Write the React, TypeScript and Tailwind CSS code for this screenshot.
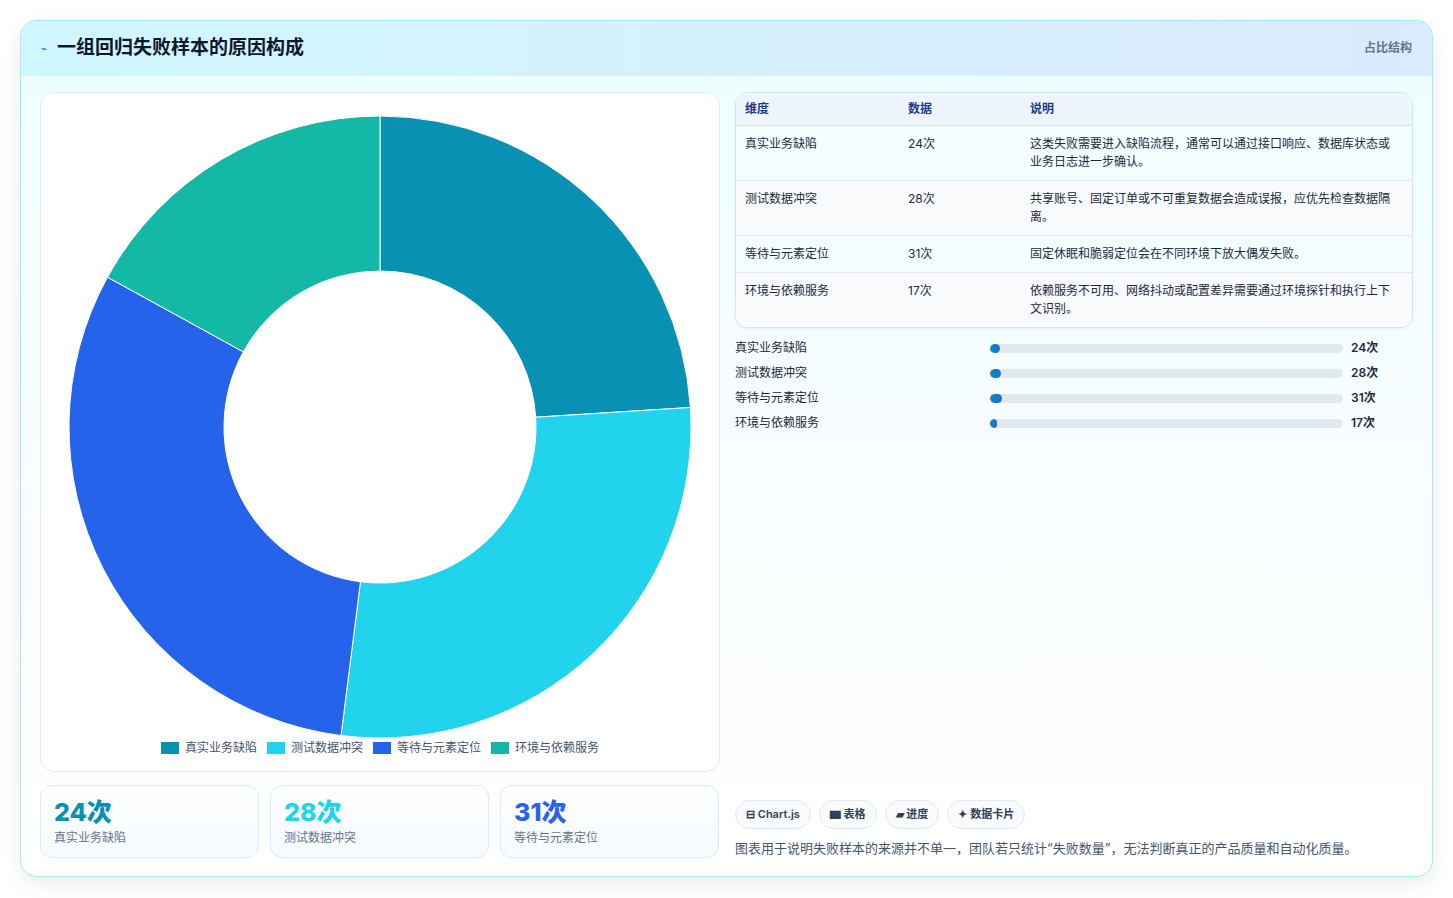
import React from "react";

const data = [
  { name: "真实业务缺陷", v: 24, c: "#0891b2", d: "这类失败需要进入缺陷流程，通常可以通过接口响应、数据库状态或业务日志进一步确认。" },
  { name: "测试数据冲突", v: 28, c: "#22d3ee", d: "共享账号、固定订单或不可重复数据会造成误报，应优先检查数据隔离。" },
  { name: "等待与元素定位", v: 31, c: "#2563eb", d: "固定休眠和脆弱定位会在不同环境下放大偶发失败。" },
  { name: "环境与依赖服务", v: 17, c: "#14b8a6", d: "依赖服务不可用、网络抖动或配置差异需要通过环境探针和执行上下文识别。" },
];

function Donut() {
  const cx = 339, cy = 322, R = 311, r = 156;
  let a = 0;
  const total = 100;
  const pt = (ang: number, rad: number) => [cx + rad * Math.sin(ang), cy - rad * Math.cos(ang)];
  return (
    <svg width="679" height="640" viewBox="0 0 679 640">
      {data.map((s) => {
        const a0 = a, a1 = a + (s.v / total) * Math.PI * 2;
        a = a1;
        const [x0, y0] = pt(a0, R), [x1, y1] = pt(a1, R), [x2, y2] = pt(a1, r), [x3, y3] = pt(a0, r);
        const large = a1 - a0 > Math.PI ? 1 : 0;
        return (
          <path key={s.name} fill={s.c} stroke="#fff" strokeWidth="1"
            d={`M${x0} ${y0} A${R} ${R} 0 ${large} 1 ${x1} ${y1} L${x2} ${y2} A${r} ${r} 0 ${large} 0 ${x3} ${y3}Z`} />
        );
      })}
    </svg>
  );
}

export default function App() {
  return (
    <div className="w-[1453px] h-[898px] bg-white p-[20px] pb-[21px]" style={{ fontFamily: "Inter, 'Noto Sans CJK SC', sans-serif" }}>
      <div className="h-[857px] rounded-[16px] border border-[#a5e9f3] overflow-hidden bg-gradient-to-b from-[#ecfeff] via-[#f8fdff] to-white shadow-[0_6px_20px_rgba(0,0,0,0.08)] flex flex-col">
        <div className="h-[55px] shrink-0 flex items-center justify-between px-[20px] bg-gradient-to-r from-[#cff7fd] to-[#dbeafe] border-b border-[#d5f3f8]">
          <div className="flex items-center gap-[10px]">
            <span className="text-[10px] text-[#2563eb]">⌁</span>
            <span className="text-[19px] font-bold text-[#0f172a]">一组回归失败样本的原因构成</span>
          </div>
          <span className="text-[12px] font-semibold text-[#64748b]">占比结构</span>
        </div>
        <div className="flex gap-[15px] px-[19px] pt-[16px]">
          <div className="w-[680px] shrink-0 flex flex-col gap-[13px]">
            <div className="h-[680px] rounded-[14px] border border-[#e2ecf3] bg-white flex flex-col items-center pt-[12px]">
              <Donut />
              <div className="flex gap-[10px] mt-[-6px] text-[12px] text-[#475569]">
                {data.map((s) => (
                  <div key={s.name} className="flex items-center gap-[6px]">
                    <span className="w-[18px] h-[12px]" style={{ background: s.c }} />
                    {s.name}
                  </div>
                ))}
              </div>
            </div>
            <div className="flex gap-[11px]">
              {data.slice(0, 3).map((s) => (
                <div key={s.name} className="w-[219px] h-[73px] rounded-[12px] border border-[#dbeafe] bg-gradient-to-b from-white to-[#f6fbff] px-[13px] pt-[10px]">
                  <div className="text-[25px] font-extrabold leading-[32px]" style={{ color: s.c }}>{s.v}次</div>
                  <div className="text-[12px] text-[#64748b] mt-[1px]">{s.name}</div>
                </div>
              ))}
            </div>
          </div>
          <div className="flex-1 flex flex-col">
            <div className="rounded-[12px] border border-[#d7e3ee] overflow-hidden bg-white shadow-[0_1px_3px_rgba(0,0,0,0.06)]">
              <div className="grid grid-cols-[163px_122px_1fr] h-[33px] items-center bg-[#eef5ff] border-b border-[#dbe5f0] text-[12px] font-semibold text-[#1e3a8a] px-[9px]">
                <span>维度</span><span>数据</span><span>说明</span>
              </div>
              {data.map((s, i) => (
                <div key={s.name} className={`grid grid-cols-[163px_122px_1fr] px-[9px] py-[9px] text-[12px] leading-[18px] text-[#1e293b] ${i < 3 ? "border-b border-[#e5ebf2]" : ""} ${i % 2 ? "bg-[#f8fafc]" : "bg-[#f3feff]"}`}>
                  <span>{s.name}</span><span>{s.v}次</span><span className="pr-[6px]">{s.d}</span>
                </div>
              ))}
            </div>
            <div className="flex flex-col gap-[7px] mt-[11px]">
              {data.map((s) => (
                <div key={s.name} className="flex items-center h-[18px] text-[12px] text-[#1e293b]">
                  <span className="w-[255px]">{s.name}</span>
                  <div className="w-[353px] h-[9px] rounded-full bg-[#e2e8f0] overflow-hidden">
                    <div className="h-full rounded-full bg-gradient-to-r from-[#0891b2] to-[#2563eb]" style={{ width: `${s.v / 100 * 40}px` }} />
                  </div>
                  <span className="ml-[8px] font-semibold">{s.v}次</span>
                </div>
              ))}
            </div>
            <div className="flex-1" />
            <div className="flex gap-[8px] mb-[10px]">
              {["⊟ Chart.js", "▆ 表格", "▰ 进度", "✦ 数据卡片"].map((t) => (
                <span key={t} className="h-[29px] px-[10px] rounded-full border border-[#e2e8f0] bg-[#f8fafc] text-[11px] font-semibold text-[#334155] flex items-center">{t}</span>
              ))}
            </div>
            <div className="text-[13px] text-[#475569] mb-[0px]">图表用于说明失败样本的来源并不单一，团队若只统计“失败数量”，无法判断真正的产品质量和自动化质量。</div>
          </div>
        </div>
      </div>
    </div>
  );
}
